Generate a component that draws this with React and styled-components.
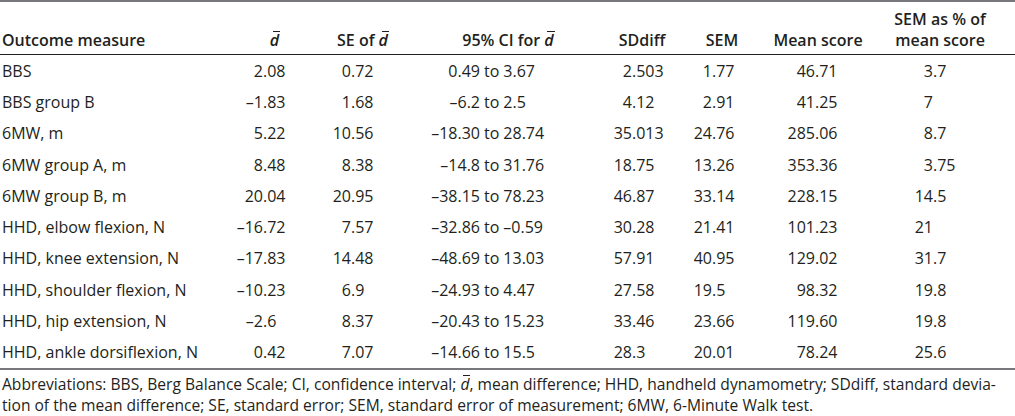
import styled, { createGlobalStyle } from 'styled-components';

const GlobalStyle = createGlobalStyle`
  body {
    margin: 0;
    background: #fff;
    color: #231f20;
    font-family: 'Open Sans', 'Noto Sans', sans-serif;
  }
`;

// col template: label, d, SE, CI, SDdiff, SEM, mean, SEM%
const COLS = '230px 70px 125px 160px 85px 95px 115px 1fr';

const rows = [
  ['BBS', '2.08', '0.72', '0.49', '3.67', '2.503', '1.77', '46.71', '3.7'],
  ['BBS group B', '–1.83', '1.68', '–6.2', '2.5', '4.12', '2.91', '41.25', '7'],
  ['6MW, m', '5.22', '10.56', '–18.30', '28.74', '35.013', '24.76', '285.06', '8.7'],
  ['6MW group A, m', '8.48', '8.38', '–14.8', '31.76', '18.75', '13.26', '353.36', '3.75'],
  ['6MW group B, m', '20.04', '20.95', '–38.15', '78.23', '46.87', '33.14', '228.15', '14.5'],
  ['HHD, elbow flexion, N', '–16.72', '7.57', '–32.86', '–0.59', '30.28', '21.41', '101.23', '21'],
  ['HHD, knee extension, N', '–17.83', '14.48', '–48.69', '13.03', '57.91', '40.95', '129.02', '31.7'],
  ['HHD, shoulder flexion, N', '–10.23', '6.9', '–24.93', '4.47', '27.58', '19.5', '98.32', '19.8'],
  ['HHD, hip extension, N', '–2.6', '8.37', '–20.43', '15.23', '33.46', '23.66', '119.60', '19.8'],
  ['HHD, ankle dorsiflexion, N', '0.42', '7.07', '–14.66', '15.5', '28.3', '20.01', '78.24', '25.6'],
];

// width of the integer box, so decimal points line up per column
const DEC = { d: 33, se: 51, ci: 55, sd: 47, sem: 42, mean: 50, pct: 53 };

const Wrap = styled.div`
  width: 1015px;
  font-size: 16px;
`;

const Table = styled.div`
  border-top: 2px solid #77787b;
  border-bottom: 2px solid #77787b;
`;

const HeadRow = styled.div`
  display: grid;
  grid-template-columns: ${COLS};
  align-items: end;
  height: 53px;
  padding-bottom: 3px;
  box-sizing: border-box;
  border-bottom: 1px solid #231f20;
  font-weight: 600;
  line-height: 21px;
`;

const HeadCell = styled.div`
  text-align: ${({ $align }) => $align || 'center'};
  padding-left: ${({ $pl }) => $pl || 0}px;
  padding-right: ${({ $pr }) => $pr || 0}px;
  white-space: nowrap;
`;

const Row = styled.div`
  display: grid;
  grid-template-columns: ${COLS};
  align-items: center;
  height: 31.3px;
`;

const Label = styled.div`
  padding-left: 2px;
  white-space: nowrap;
`;

const Cell = styled.div`
  display: flex;
  white-space: nowrap;
`;

const Int = styled.span`
  flex: none;
  width: ${({ $w }) => $w}px;
  text-align: right;
`;

const To = styled.span`
  padding: 0 4px;
`;

const Dbar = styled.i`
  position: relative;
  font-weight: inherit;
  &::before {
    content: '';
    position: absolute;
    left: 3px;
    right: -1px;
    top: 2px;
    border-top: 1px solid currentColor;
  }
`;

const Note = styled.p`
  margin: 0;
  padding: 4px 2px 0;
  font-size: 15.6px;
  line-height: 21px;
  white-space: nowrap;
`;

const Num = ({ v, w }) => {
  const i = v.indexOf('.');
  const int = i < 0 ? v : v.slice(0, i);
  const frac = i < 0 ? '' : v.slice(i);
  return (
    <Cell>
      <Int $w={w}>{int}</Int>
      <span>{frac}</span>
    </Cell>
  );
};

const Ci = ({ lo, hi }) => (
  <Cell>
    <Int $w={DEC.ci}>{lo}</Int>
    <To>to</To>
    <span>{hi}</span>
  </Cell>
);

const D = () => <Dbar>d</Dbar>;

export default function App() {
  return (
    <>
      <GlobalStyle />
      <Wrap>
        <Table>
          <HeadRow>
            <HeadCell $align="left" $pl={2}>Outcome measure</HeadCell>
            <HeadCell $align="right" $pr={21}><D /></HeadCell>
            <HeadCell>SE of <D /></HeadCell>
            <HeadCell $pl={6}>95% CI for <D /></HeadCell>
            <HeadCell $pl={29}>SDdiff</HeadCell>
            <HeadCell $pl={9}>SEM</HeadCell>
            <HeadCell $pr={9}>Mean score</HeadCell>
            <HeadCell $pr={15}>SEM as % of<br />mean score</HeadCell>
          </HeadRow>
          {rows.map((r) => (
            <Row key={r[0]}>
              <Label>{r[0]}</Label>
              <Num v={r[1]} w={DEC.d} />
              <Num v={r[2]} w={DEC.se} />
              <Ci lo={r[3]} hi={r[4]} />
              <Num v={r[5]} w={DEC.sd} />
              <Num v={r[6]} w={DEC.sem} />
              <Num v={r[7]} w={DEC.mean} />
              <Num v={r[8]} w={DEC.pct} />
            </Row>
          ))}
        </Table>
        <Note>
          Abbreviations: BBS, Berg Balance Scale; CI, confidence interval; <D />, mean difference; HHD,
          handheld dynamometry; SDdiff, standard devia-<br />
          tion of the mean difference; SE, standard error; SEM, standard error of measurement; 6MW,
          6-Minute Walk test.
        </Note>
      </Wrap>
    </>
  );
}
